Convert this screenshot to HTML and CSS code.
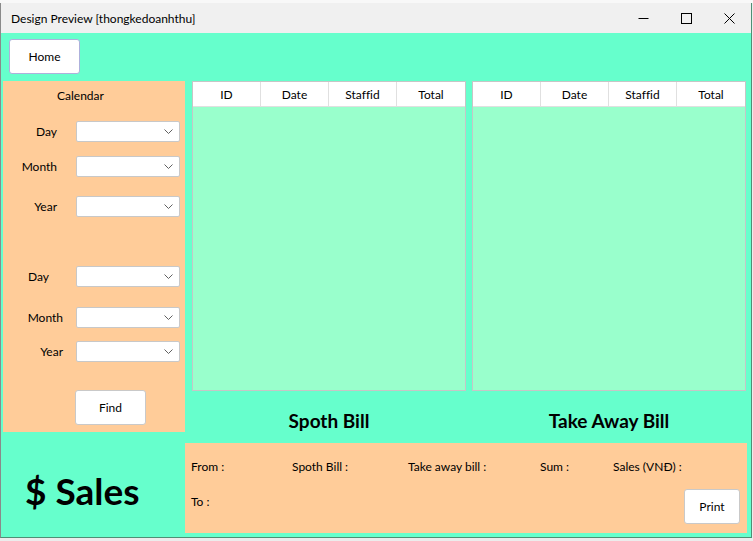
FILE: index.html
```html
<!DOCTYPE html>
<html>
<head>
<meta charset="utf-8">
<title>Design Preview [thongkedoanhthu]</title>
<link rel="stylesheet" href="styles.css">
</head>
<body>
<div class="desk-top"></div>
<div class="window">
  <div class="titlebar">
    <span class="title">Design Preview [thongkedoanhthu]</span>
    <div class="ctl"><svg width="11" height="11" viewBox="0 0 11 11"><line x1="0.5" y1="5.5" x2="10.5" y2="5.5" stroke="#000" stroke-width="1"/></svg></div>
    <div class="ctl"><svg width="11" height="11" viewBox="0 0 11 11"><rect x="0.5" y="0.5" width="10" height="10" fill="none" stroke="#000" stroke-width="1"/></svg></div>
    <div class="ctl"><svg width="11" height="11" viewBox="0 0 11 11"><path d="M0.5 0.5 L10.5 10.5 M10.5 0.5 L0.5 10.5" stroke="#000" stroke-width="1"/></svg></div>
  </div>
  <div class="content">
    <div class="toolbar"><button class="btn btn-home">Home</button></div>
    <div class="main">
      <div class="leftcol">
        <div class="calendar">
          <div class="cal-title">Calendar</div>
          <div class="field r1"><span class="lbl">Day</span><div class="combo"><svg width="9" height="5" viewBox="0 0 9 5"><polyline points="0.5,0.5 4.5,4.5 8.5,0.5" fill="none" stroke="#606060" stroke-width="1"/></svg></div></div>
          <div class="field r2"><span class="lbl">Month</span><div class="combo"><svg width="9" height="5" viewBox="0 0 9 5"><polyline points="0.5,0.5 4.5,4.5 8.5,0.5" fill="none" stroke="#606060" stroke-width="1"/></svg></div></div>
          <div class="field r3"><span class="lbl">Year</span><div class="combo"><svg width="9" height="5" viewBox="0 0 9 5"><polyline points="0.5,0.5 4.5,4.5 8.5,0.5" fill="none" stroke="#606060" stroke-width="1"/></svg></div></div>
          <div class="field r4"><span class="lbl">Day</span><div class="combo"><svg width="9" height="5" viewBox="0 0 9 5"><polyline points="0.5,0.5 4.5,4.5 8.5,0.5" fill="none" stroke="#606060" stroke-width="1"/></svg></div></div>
          <div class="field r5"><span class="lbl">Month</span><div class="combo"><svg width="9" height="5" viewBox="0 0 9 5"><polyline points="0.5,0.5 4.5,4.5 8.5,0.5" fill="none" stroke="#606060" stroke-width="1"/></svg></div></div>
          <div class="field r6"><span class="lbl">Year</span><div class="combo"><svg width="9" height="5" viewBox="0 0 9 5"><polyline points="0.5,0.5 4.5,4.5 8.5,0.5" fill="none" stroke="#606060" stroke-width="1"/></svg></div></div>
          <button class="btn btn-find">Find</button>
        </div>
        <div class="sales">$ Sales</div>
      </div>
      <div class="rightcol">
        <div class="tables">
          <div class="grid">
            <div class="ghead"><div>ID</div><div>Date</div><div>Staffid</div><div>Total</div></div>
          </div>
          <div class="grid">
            <div class="ghead"><div>ID</div><div>Date</div><div>Staffid</div><div>Total</div></div>
          </div>
        </div>
        <div class="titles">
          <div class="ttl">Spoth Bill</div>
          <div class="ttl">Take Away Bill</div>
        </div>
        <div class="summary">
          <div class="srow">
            <span class="s-from">From :</span>
            <span class="s-spoth">Spoth Bill :</span>
            <span class="s-take">Take away bill :</span>
            <span class="s-sum">Sum :</span>
            <span>Sales (VNĐ) :</span>
          </div>
          <div class="srow2">
            <span class="s-to">To :</span>
            <button class="btn btn-print">Print</button>
          </div>
        </div>
      </div>
    </div>
  </div>
</div>
</body>
</html>
```
FILE: styles.css
```css
* { box-sizing: border-box; }
html, body { margin: 0; }
body {
  width: 753px;
  height: 541px;
  overflow: hidden;
  background: #ececec;
  font-family: Lato, "Open Sans", sans-serif;
  font-size: 12px;
  color: #000;
  font-variant-ligatures: none;
}
.desk-top { height: 3px; background: #f8f8f8; }
.window {
  width: 752px;
  border-left: 1px solid #8a8a8a;
  border-right: 1px solid #4f8f75;
  border-bottom: 1px solid #4f8f75;
  background: #66ffcc;
}
.titlebar {
  height: 30px;
  background: #f0f0f0;
  display: flex;
  align-items: center;
  padding-left: 10px;
}
.title { flex: 1; }
.ctl {
  width: 43px;
  height: 30px;
  display: flex;
  align-items: center;
  justify-content: center;
}
.content {
  height: 504px;
  display: flex;
  flex-direction: column;
}
.toolbar { height: 48px; padding: 6px 0 0 8px; }
.btn {
  background: #fff;
  border: 1px solid #c9c9c9;
  border-radius: 3px;
  font: inherit;
  font-variant-ligatures: none;
  color: #000;
  height: 35px;
  padding: 0;
}
.btn-home { width: 71px; border-color: #aeb0dc; }
.main { display: flex; flex: 1; }
.leftcol {
  width: 182px;
  margin-left: 2px;
  display: flex;
  flex-direction: column;
}
.calendar {
  height: 351px;
  background: #ffcc99;
  display: flex;
  flex-direction: column;
}
.cal-title { margin-top: 7px; line-height: 16px; padding-left: 54px; }
.field { display: flex; align-items: center; height: 21px; }
.lbl { width: 73px; text-align: right; }
.r1 { margin-top: 17px; }
.r2 { margin-top: 14px; }
.r3 { margin-top: 19px; }
.r4 { margin-top: 49px; }
.r5 { margin-top: 20px; }
.r6 { margin-top: 13px; }
.r1 .lbl, .r2 .lbl, .r3 .lbl { padding-right: 19px; }
.r4 .lbl { padding-right: 27px; }
.r5 .lbl, .r6 .lbl { padding-right: 13px; }
.combo {
  width: 104px;
  height: 21px;
  background: #fff;
  border: 1px solid #c8c8c8;
  border-radius: 2px;
  display: flex;
  align-items: center;
  justify-content: flex-end;
  padding-right: 6px;
}
.btn-find { width: 71px; margin: 28px 0 0 72px; }
.sales {
  flex: 1;
  padding: 12px 0 0 22px;
  display: flex;
  align-items: center;
  font-size: 37px;
  font-weight: bold;
}
.rightcol {
  flex: 1;
  padding: 0 4px 4px 7px;
  display: flex;
  flex-direction: column;
}
.tables { display: flex; gap: 6px; height: 310px; }
.grid {
  width: 274px;
  border: 1px solid #c6c6c6;
  background: #99ffcc;
}
.ghead {
  display: grid;
  grid-template-columns: repeat(4, 68px);
  height: 25px;
  background: #fff;
  border-bottom: 1px solid #e0e0e0;
}
.ghead div {
  border-right: 1px solid #e0e0e0;
  display: flex;
  align-items: center;
  justify-content: center;
}
.ghead div:last-child { border-right: none; }
.titles { height: 52px; display: flex; gap: 6px; }
.ttl {
  width: 274px;
  text-align: center;
  font-size: 19px;
  font-weight: bold;
  line-height: 24px;
  padding-top: 18px;
}
.summary {
  height: 90px;
  margin-left: -7px;
  background: #ffcc99;
  display: flex;
  flex-direction: column;
}
.srow { display: flex; margin-top: 16px; padding-left: 6px; line-height: 16px; }
.s-from { width: 101px; }
.s-spoth { width: 116px; }
.s-take { width: 132px; }
.s-sum { width: 73px; }
.srow2 {
  display: flex;
  justify-content: space-between;
  align-items: flex-start;
  padding-left: 6px;
}
.s-to { margin-top: 19px; line-height: 16px; }
.btn-print { width: 56px; margin: 14px 7px 0 0; }
```
